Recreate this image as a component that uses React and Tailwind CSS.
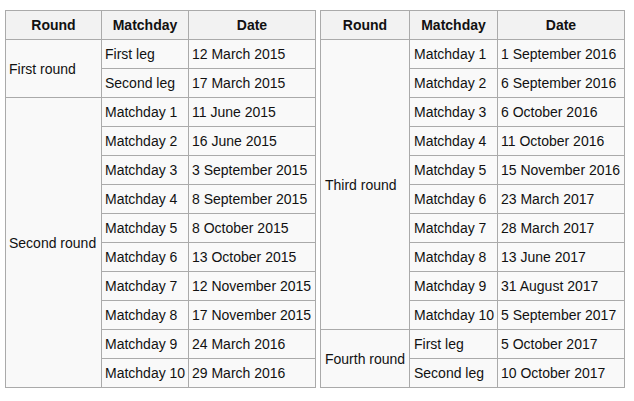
import React from 'react';

const LEFT = [
  { round: 'First round', rows: [['First leg', '12 March 2015'], ['Second leg', '17 March 2015']] },
  {
    round: 'Second round',
    rows: [
      ['Matchday 1', '11 June 2015'],
      ['Matchday 2', '16 June 2015'],
      ['Matchday 3', '3 September 2015'],
      ['Matchday 4', '8 September 2015'],
      ['Matchday 5', '8 October 2015'],
      ['Matchday 6', '13 October 2015'],
      ['Matchday 7', '12 November 2015'],
      ['Matchday 8', '17 November 2015'],
      ['Matchday 9', '24 March 2016'],
      ['Matchday 10', '29 March 2016'],
    ],
  },
];

const RIGHT = [
  {
    round: 'Third round',
    rows: [
      ['Matchday 1', '1 September 2016'],
      ['Matchday 2', '6 September 2016'],
      ['Matchday 3', '6 October 2016'],
      ['Matchday 4', '11 October 2016'],
      ['Matchday 5', '15 November 2016'],
      ['Matchday 6', '23 March 2017'],
      ['Matchday 7', '28 March 2017'],
      ['Matchday 8', '13 June 2017'],
      ['Matchday 9', '31 August 2017'],
      ['Matchday 10', '5 September 2017'],
    ],
  },
  { round: 'Fourth round', rows: [['First leg', '5 October 2017'], ['Second leg', '10 October 2017']] },
];

const cell = 'border-r border-b border-[#aaaaaa] py-[3px] leading-[22px] p-0';

function Schedule({ groups, widths, tableWidth, pad }) {
  return (
    <table
      className="table-fixed border-separate border-spacing-0 border-l border-t border-[#aaaaaa] bg-[#f9f9f9] text-[14px] text-[#111]"
      style={{ width: tableWidth }}
    >
      <colgroup>
        {widths.map((w, i) => <col key={i} style={{ width: w }} />)}
      </colgroup>
      <thead>
        <tr className="bg-[#f2f2f2]">
          <th className={`${cell} px-[3px] text-center font-bold`}>Round</th>
          <th className={`${cell} px-[3px] text-center font-bold`}>Matchday</th>
          <th className={`${cell} px-[3px] text-center font-bold`}>Date</th>
        </tr>
      </thead>
      <tbody>
        {groups.map(g =>
          g.rows.map(([md, date], i) => (
            <tr key={g.round + md}>
              {i === 0 && (
                <td rowSpan={g.rows.length} className={`${cell} ${pad} pr-0 align-middle whitespace-nowrap`}>
                  {g.round}
                </td>
              )}
              <td className={`${cell} ${pad} pr-0 whitespace-nowrap`}>{md}</td>
              <td className={`${cell} pl-[3px] pr-0 whitespace-nowrap`}>{date}</td>
            </tr>
          ))
        )}
      </tbody>
    </table>
  );
}

export default function App() {
  return (
    <div className="w-[634px] h-[401px] bg-white pl-[5px] pt-[10px] font-['Liberation_Sans',Arial,sans-serif]">
      <div className="flex items-start gap-[4px]">
        <Schedule groups={LEFT} widths={[96, 87, 127]} tableWidth={311} pad="pl-[3px]" />
        <Schedule groups={RIGHT} widths={[89, 88, 127]} tableWidth={305} pad="pl-[4px]" />
      </div>
    </div>
  );
}
